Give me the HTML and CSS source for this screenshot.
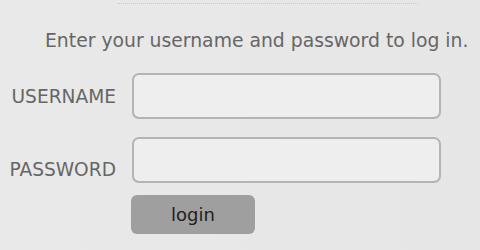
FILE: index.html
```html
<!DOCTYPE html>
<html>
<head>
<meta charset="utf-8">
<link rel="stylesheet" href="styles.css">
</head>
<body>
<div class="page">
  <div class="topline"></div>
  <p class="intro">Enter your username and password to log in.</p>
  <form class="form">
    <label class="label label-user" for="u">USERNAME</label>
    <input class="field" id="u" type="text">
    <label class="label label-pass" for="p">PASSWORD</label>
    <input class="field" id="p" type="password">
    <span></span>
    <button class="btn" type="button">login</button>
  </form>
</div>
</body>
</html>
```

FILE: styles.css
```css
html, body {
  margin: 0;
  padding: 0;
}
body {
  width: 480px;
  height: 250px;
  overflow: hidden;
  background: linear-gradient(90deg, #e9e9e9 0%, #e6e6e6 100%);
  font-family: "DejaVu Sans", Verdana, sans-serif;
  color: #666;
}
.page {
  position: relative;
  height: 250px;
}
.topline {
  margin-left: 117px;
  width: 301px;
  height: 3px;
  border-bottom: 1px dotted #c9c9c9;
}
.intro {
  margin: 0;
  padding: 25px 0 0 45px;
  font-size: 18.8px;
  line-height: 24px;
  white-space: nowrap;
}
.form {
  display: grid;
  grid-template-columns: 116px 309px;
  column-gap: 16px;
  row-gap: 18px;
  margin-top: 20px;
  align-items: center;
}
.label {
  text-align: right;
  font-size: 18.6px;
  line-height: 20px;
  color: #666;
}
.label-user {
  padding-top: 2px;
}
.label-pass {
  align-self: end;
  padding-bottom: 3px;
}
.field {
  box-sizing: border-box;
  width: 309px;
  height: 46px;
  margin: 0;
  border: 2px solid #b4b4b4;
  border-radius: 7px;
  background: #eeeeee;
  outline: none;
}
.btn {
  box-sizing: border-box;
  width: 124px;
  height: 39px;
  margin: -6px 0 0 -1px;
  border: none;
  border-radius: 6px;
  background: #9f9f9f;
  color: #1e1e1e;
  font-family: "DejaVu Sans", Verdana, sans-serif;
  font-size: 18px;
  padding: 0;
}
```
